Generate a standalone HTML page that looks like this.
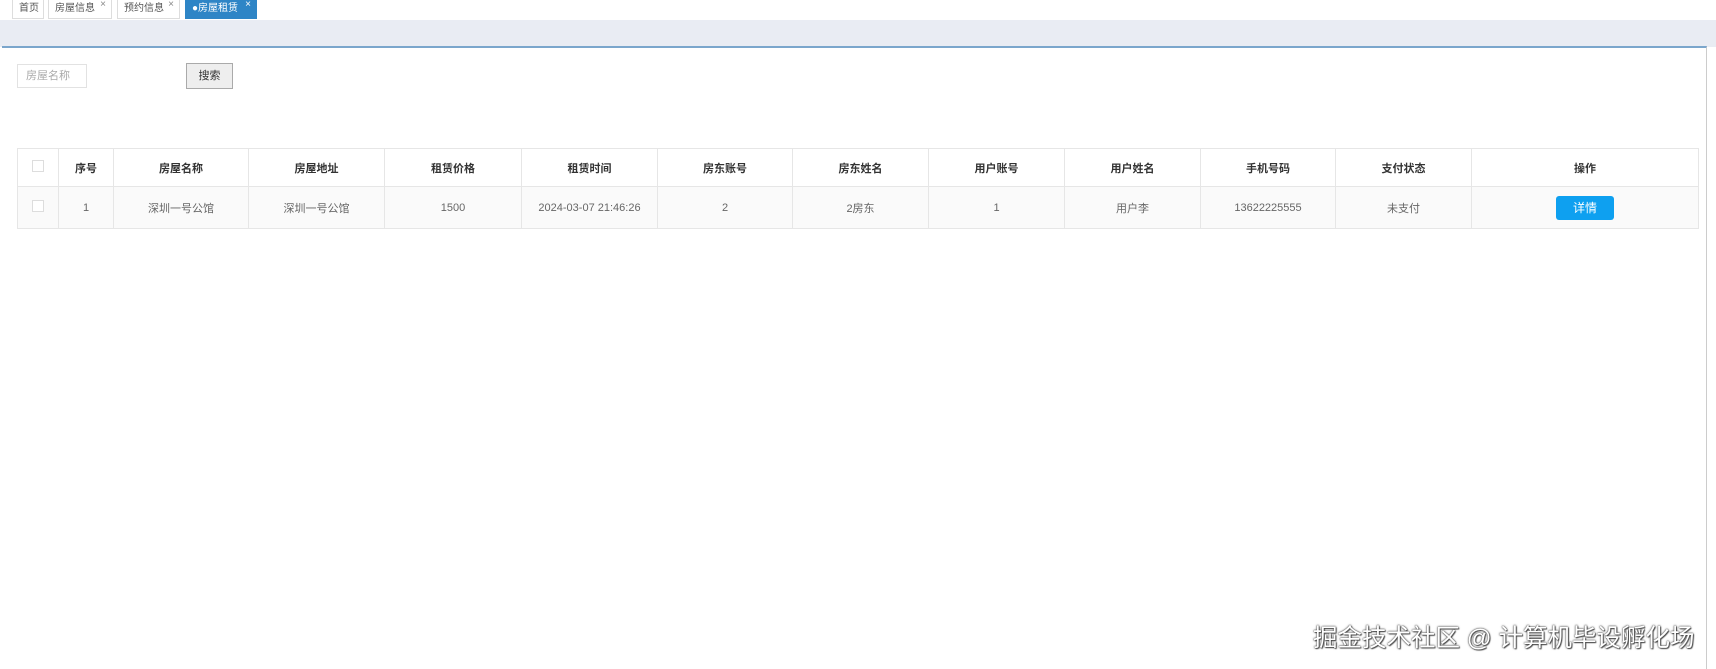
<!DOCTYPE html>
<html><head><meta charset="utf-8"><style>
body{margin:0;width:1716px;height:669px;background:#fff;font-family:"Liberation Sans","Noto Sans CJK SC",sans-serif;position:relative;overflow:hidden;font-size:11px;color:#555}
.tab{position:absolute;top:0;height:19px;border:1px solid #ddd;border-top:none;box-sizing:border-box;line-height:18px;font-size:10px;padding-left:6px;color:#555}
.tab i{position:absolute;right:5px;top:-4px;font-style:normal;font-size:10px;color:#888}
.band{position:absolute;top:20px;left:0;width:1716px;height:27px;background:#e9ecf3}
.main{position:absolute;top:46px;left:2px;width:1705px;height:623px;border-top:2px solid #7ba6cc;border-right:1px solid #ccc;box-sizing:border-box;background:#fff}
table{position:absolute;left:17px;top:148px;border-collapse:collapse;width:1682px;font-size:11px;table-layout:fixed}
td,th{border:1px solid #e6e6e6;text-align:center;padding:0}
th{height:37px;font-weight:bold;color:#333;background:#fff}
td{height:41px;background:#fafafa;color:#666}
.cb{display:inline-block;width:10px;height:10px;border:1px solid #ddd;background:#fff}
</style></head><body>
<div class="tab" style="left:12px;width:32px">首页</div>
<div class="tab" style="left:48px;width:64px">房屋信息<i>×</i></div>
<div class="tab" style="left:117px;width:63px">预约信息<i>×</i></div>
<div class="tab" style="left:185px;width:72px;background:#2e85c6;color:#fff;border-color:#2e85c6">●房屋租赁<i style="color:#fff">×</i></div>
<div class="band"></div>
<div class="main"></div>
<div style="position:absolute;left:17px;top:64px;width:70px;height:24px;border:1px solid #e2e2e2;box-sizing:border-box;color:#aaa;line-height:22px;padding-left:8px;font-size:11px">房屋名称</div>
<div style="position:absolute;left:186px;top:63px;width:47px;height:26px;border:1px solid #aaa;background:#eee;box-sizing:border-box;color:#333;line-height:24px;text-align:center;font-size:11px">搜索</div>
<table>
<colgroup><col style="width:41px"><col style="width:55px"><col style="width:135px"><col style="width:136px"><col style="width:137px"><col style="width:136px"><col style="width:135px"><col style="width:136px"><col style="width:136px"><col style="width:136px"><col style="width:135px"><col style="width:136px"><col></colgroup>
<tr><th><span class="cb"></span></th><th>序号</th><th>房屋名称</th><th>房屋地址</th><th>租赁价格</th><th>租赁时间</th><th>房东账号</th><th>房东姓名</th><th>用户账号</th><th>用户姓名</th><th>手机号码</th><th>支付状态</th><th>操作</th></tr>
<tr><td><span class="cb"></span></td><td>1</td><td>深圳一号公馆</td><td>深圳一号公馆</td><td>1500</td><td>2024-03-07 21:46:26</td><td>2</td><td>2房东</td><td>1</td><td>用户李</td><td>13622225555</td><td>未支付</td><td><span style="display:inline-block;width:58px;height:24px;line-height:24px;background:#0ea0f0;color:#fff;border-radius:3px;font-size:12px">详情</span></td></tr>
</table>
<div style="position:absolute;left:1313px;top:619px;font-size:24.5px;color:#fff;text-shadow:0 0 2px #444,0 0 1px #222,1px 1px 1px #555;white-space:nowrap">掘金技术社区 @ 计算机毕设孵化场</div>
</body></html>
